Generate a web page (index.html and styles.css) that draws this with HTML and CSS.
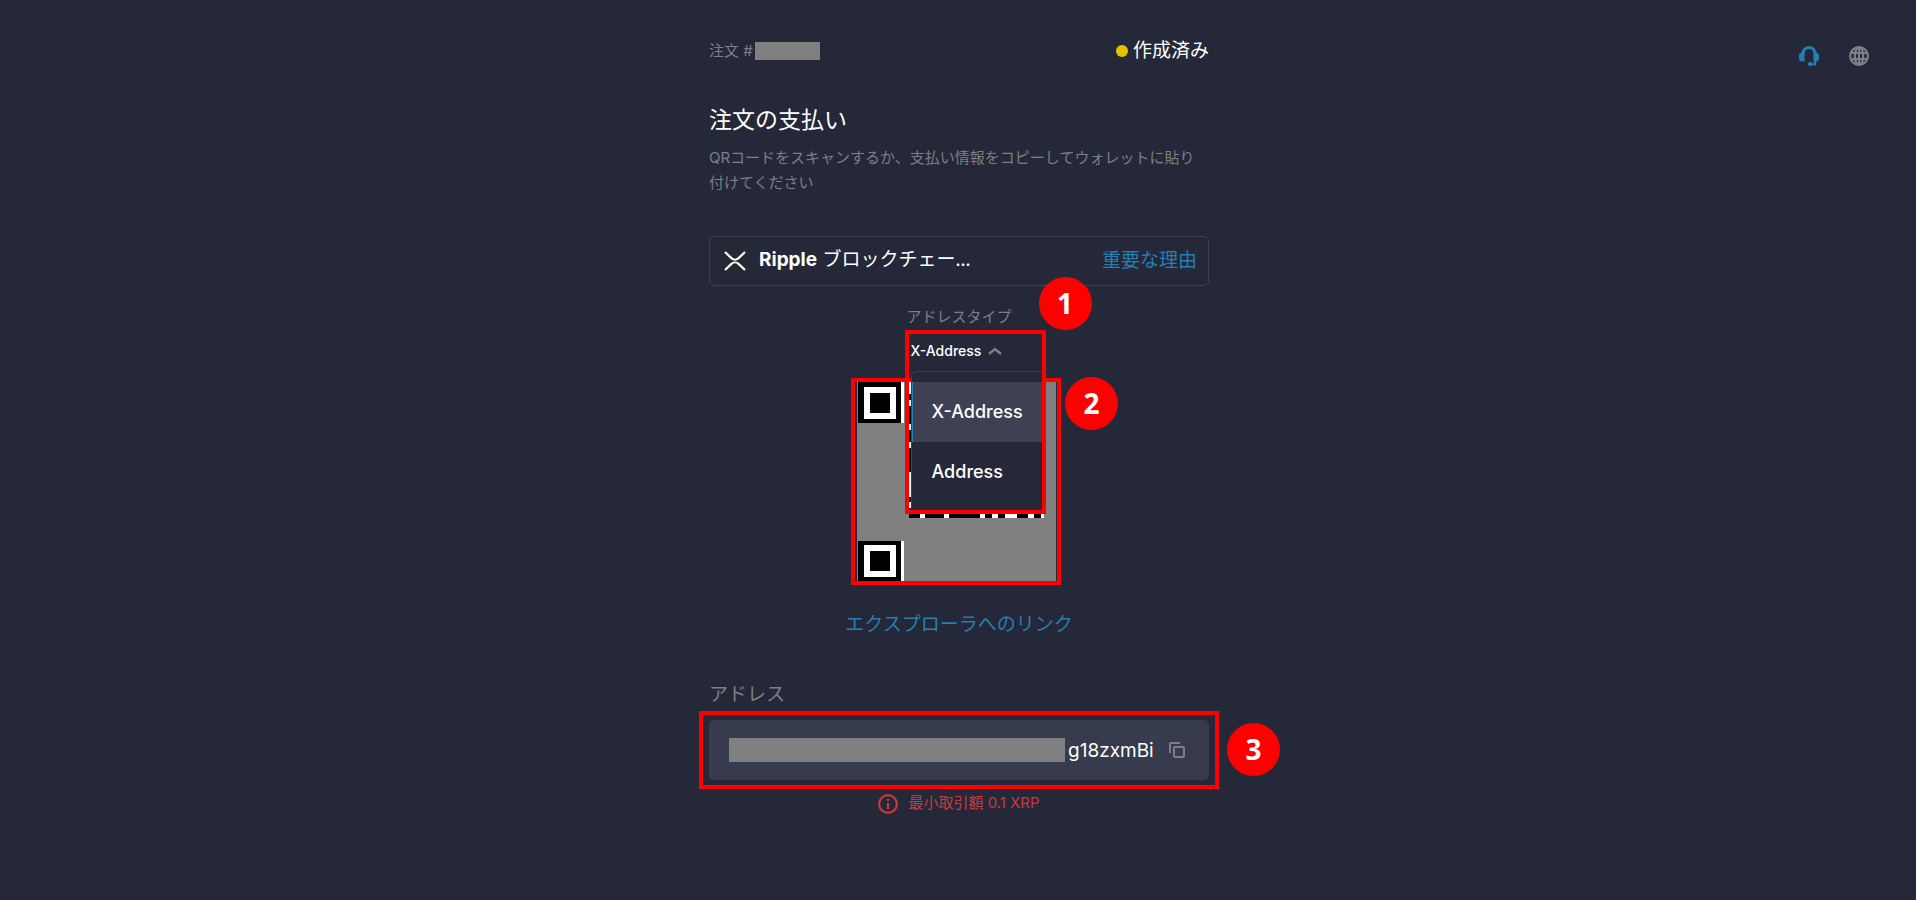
FILE: index.html
```
<!DOCTYPE html>
<html lang="ja">
<head>
<meta charset="utf-8">
<meta name="viewport" content="width=device-width, initial-scale=1">
<title>注文の支払い</title>
<link rel="stylesheet" href="styles.css">
</head>
<body>
<nav class="tools" aria-label="ツール">
  <button class="icon-button support" type="button" aria-label="サポート">
    <svg width="20" height="20" viewBox="0 0 20 20" fill="none" stroke="currentColor"><path d="M4 9V7.500C4 4 6.500 1.500 10 1.500S16 4 16 7.500V9" stroke-width="3"/><path d="M5.500 6.500v9H3.500a3.500 3.500 0 0 1-3.500-3.500v-2a3.500 3.500 0 0 1 3.500-3.500zM14.500 6.500v9h2a3.500 3.500 0 0 0 3.500-3.500v-2a3.500 3.500 0 0 0-3.500-3.500z" fill="currentColor" stroke="none"/><path d="M16.200 14v4.200H11" stroke-width="2"/><rect x="9" y="16" width="4.500" height="4" rx="1.800" fill="currentColor" stroke="none"/></svg>
  </button>
  <button class="icon-button" type="button" aria-label="言語">
    <svg width="20" height="20" viewBox="0 0 20 20" fill="none" stroke="currentColor" stroke-width="2.200"><circle cx="10" cy="10" r="8.900"/><ellipse cx="10" cy="10" rx="4.200" ry="8.900"/><path d="M10 1v18M1.500 7h17M1.500 13h17"/></svg>
  </button>
</nav>
<main class="order">
  <header class="order-head">
    <div class="order-id">注文 #<span class="redacted redacted-id"></span></div>
    <div class="status"><span class="status-dot"></span>作成済み</div>
  </header>
  <h1 class="title">注文の支払い</h1>
  <p class="intro">QRコードをスキャンするか、支払い情報をコピーしてウォレットに貼り付けてください</p>
  <section class="network">
    <svg class="xrp" width="28" height="28" viewBox="0 0 28 28" fill="none"><circle cx="14" cy="14" r="13" fill="#232a32"/><path d="M4 5l6.400 6.100c2 1.900 5.200 1.900 7.200 0L24 5M4 23l6.400-6.100c2-1.900 5.200-1.900 7.200 0L24 23" stroke="#fff" stroke-width="2.200"/></svg>
    <div class="network-name"><strong>Ripple</strong> ブロックチェー<strong class="dots">...</strong></div>
    <a class="link" href="#">重要な理由</a>
  </section>
  <section class="address-type">
    <span class="type-label" id="type-label">アドレスタイプ</span>
    <button class="type-button" type="button" aria-describedby="type-label" aria-expanded="true">X-Address
      <svg width="14" height="8" viewBox="0 0 14 8" fill="none" stroke="#7d7f86" stroke-width="2.400"><path d="M1 7l6-5 6 5"/></svg>
    </button>
    <div class="type-menu" role="listbox" aria-labelledby="type-label">
      <button class="option option-active" type="button" role="option" aria-selected="true">X-Address</button>
      <button class="option" type="button" role="option" aria-selected="false">Address</button>
    </div>
    <span class="frame frame-type"></span>
    <span class="badge badge-1">1</span>
  </section>
  <div class="qr">
    <svg class="qr-code" width="202" height="199" viewBox="0 0 202 199" shape-rendering="crispEdges">
      <path fill="#808080" d="M2 0h199v199H2z"/>
      <path fill="#000" d="M3 0h43v41H3zM3 159h43v40H3z"/>
      <path fill="#fff" d="M9 5h32v32H9zM46 0h3v41h-3zM9 163h32v32H9zM46 159h3v40h-3z"/>
      <path fill="#000" d="M15 11h20v20H15zM15 169h20v20H15zM54 0h135v136H54z"/>
      <path fill="#fff" d="M54 0h2v12h-2zM54 18h2v6h-2zM54 42h2v6h-2zM54 60h2v6h-2zM54 90h2v25h-2zM54 120h2v6h-2zM65 132h5v4h-5zM89 132h5v4h-5zM125 132h5v4h-5zM137 132h6v4h-6zM150 132h12v4h-12zM173 132h6v4h-6zM186 132h3v4h-3z"/>
    </svg>
    <span class="badge badge-2">2</span>
  </div>
  <a class="link explorer" href="#">エクスプローラへのリンク</a>
  <section class="address">
    <div class="address-label">アドレス</div>
    <div class="address-box">
      <span class="redacted redacted-address"></span>
      <span class="address-tail">g18zxmBi</span>
      <button class="icon-button copy" type="button" aria-label="コピー">
        <svg width="16" height="16" viewBox="0 0 16 16" fill="none" stroke="currentColor" stroke-width="2"><rect x="5" y="5" width="10" height="10" rx="1"/><path d="M1 11V2a1 1 0 0 1 1-1h9"/></svg>
      </button>
      <span class="frame frame-address"></span>
      <span class="badge badge-3">3</span>
    </div>
  </section>
  <p class="minimum">
    <svg width="20" height="20" viewBox="0 0 20 20" fill="none" stroke="currentColor" stroke-width="2.200"><circle cx="10" cy="10" r="8.900"/><path d="M10 9v6M10 5v2"/></svg>
    <span class="minimum-text">最小取引額 0.1 XRP</span>
  </p>
</main>
</body>
</html>
```
FILE: styles.css
```
* { box-sizing: border-box; }
body {
  margin: 0;
  min-height: 100vh;
  padding-left: 2px;
  background: #252838;
  color: #fff;
  font-family: Inter, "Noto Sans CJK JP", sans-serif;
  font-size: 19px;
  line-height: 25px;
}
button {
  padding: 0;
  border: 0;
  background: none;
  color: inherit;
  font: inherit;
  cursor: pointer;
}
.tools {
  position: absolute;
  top: 46px;
  right: 47px;
  display: flex;
  gap: 30px;
}
.icon-button { display: flex; color: #7d7f86; }
.support { color: #247fb2; }
.order {
  display: flex;
  flex-direction: column;
  width: 100%;
  max-width: 500px;
  margin: 0 auto;
  padding-top: 38px;
}
.order-head { display: flex; justify-content: space-between; align-items: center; }
.order-id {
  display: flex;
  align-items: center;
  gap: 2px;
  font-size: 15px;
  color: #7d7f86;
  white-space: pre;
}
.redacted { background: #808080; }
.redacted-id { width: 65px; height: 18px; }
.status { display: flex; align-items: center; gap: 5px; }
.status-dot { width: 12px; height: 12px; border-radius: 50%; background: #e6c200; }
.title { margin: 41px 0 0; font-size: 23px; line-height: 32px; font-weight: 400; }
.intro {
  margin: 9px 0 0;
  padding-right: 6px;
  font-size: 15px;
  color: #7d7f86;
}
.network {
  display: flex;
  align-items: center;
  height: 50px;
  margin-top: 41px;
  padding: 0 11px;
  border: 1px solid #3d4153;
  border-radius: 5px;
}
.network-name { flex: 1; margin-left: 10px; }
.network-name strong { font-weight: 700; }
.network-name .dots { font-size: 15px; }
.link { color: #247fb2; text-decoration: none; }
.network-name, .network .link { padding-bottom: 2px; }
.address-type {
  position: relative;
  left: 16px;
  display: flex;
  flex-direction: column;
  align-items: flex-start;
  width: 141px;
  height: 92px;
  margin: 0 auto;
  padding: 18px 0 0 2px;
}
.type-label { font-size: 15px; color: #7d7f86; }
.type-button {
  display: flex;
  align-items: center;
  gap: 7px;
  margin: 9px 0 0 4px;
  font-size: 14px;
  font-weight: 500;
}
.type-menu {
  position: absolute;
  z-index: 1;
  top: 85px;
  left: 6px;
  width: 134px;
  padding: 10px 0;
  border: 1px solid #3d4153;
  border-radius: 5px;
  background: #252838;
}
.option {
  display: block;
  width: 100%;
  height: 60px;
  padding: 0 0 2px 19px;
  border-left: 1px solid transparent;
  font-size: 18px;
  font-weight: 500;
  text-align: left;
}
.option-active { border-left-color: #247fb2; background: #3d4153; }
.frame { position: absolute; z-index: 2; border: 4px solid #f00; pointer-events: none; }
.frame-type { top: 44px; left: 0; width: 141px; height: 184px; }
.frame-address { inset: -9px -10px; }
.badge {
  position: absolute;
  z-index: 3;
  width: 53px;
  height: 53px;
  border-radius: 50%;
  background: #f00;
  font: 700 28px/53px "Noto Sans", sans-serif;
  text-align: center;
}
.badge-1 { top: -9px; left: 134px; }
.badge-2 { top: -5px; left: 210px; }
.badge-3 { top: 3px; left: 518px; }
.qr { position: relative; align-self: center; margin-right: 6px; border: 4px solid #f00; }
.qr-code { display: block; }
.explorer { align-self: center; margin-top: 27px; }
.address { margin-top: 45px; }
.address-label { color: #7d7f86; }
.address-box {
  position: relative;
  display: flex;
  align-items: center;
  height: 60px;
  margin-top: 13px;
  padding: 0 24px 0 20px;
  border-radius: 5px;
  background: #373b4e;
}
.redacted-address { width: 336px; height: 24px; }
.address-tail { margin-left: 3px; font-size: 19px; }
.copy { margin-left: auto; }
.minimum {
  display: flex;
  justify-content: center;
  align-items: center;
  gap: 10px;
  margin: 10px 0 0;
  font-size: 15px;
  color: #c93a3c;
}
.minimum-text { padding-bottom: 2px; }
```
